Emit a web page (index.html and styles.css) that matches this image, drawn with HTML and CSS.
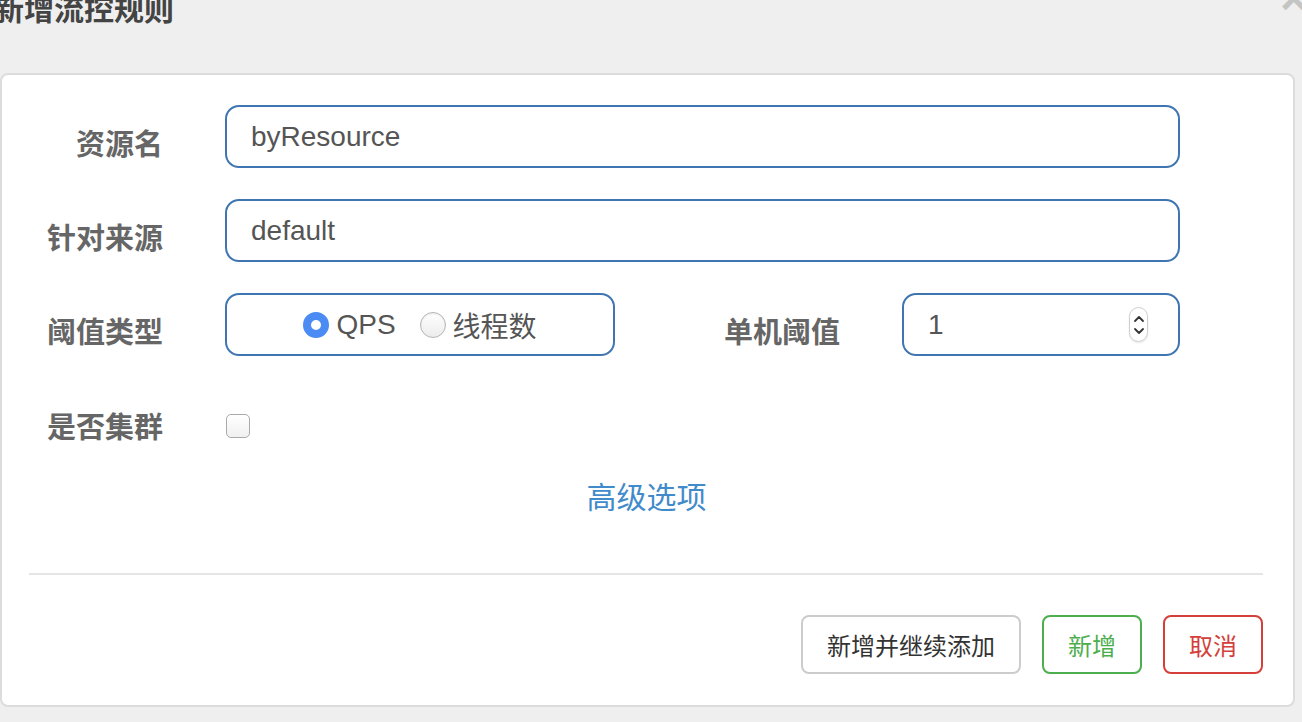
FILE: index.html
```html
<!DOCTYPE html>
<html lang="zh-CN">

<head>
    <meta charset="UTF-8">
    <meta name="viewport" content="width=device-width, initial-scale=1.0">
    <title>新增流控规则</title>
    <link rel="stylesheet" href="styles.css">
</head>

<body>
    <!-- 标题栏 -->
    <div class="modal-header">
        <h4 class="modal-title">新增流控规则</h4>
        <span class="close">&times;</span>
    </div>

    <div class="modal-content">
        <div class="modal-body">
            <form class="rule-form">
                <div class="form-row">
                    <label class="control-label">资源名</label>
                    <input type="text" class="form-control wide" value="byResource">
                </div>

                <div class="form-row">
                    <label class="control-label">针对来源</label>
                    <input type="text" class="form-control wide" value="default">
                </div>

                <div class="form-row">
                    <label class="control-label">阈值类型</label>
                    <div class="form-control radio-group">
                        <label class="radio-item"><input type="radio" name="grade" checked>QPS</label>
                        <label class="radio-item"><input type="radio" name="grade">线程数</label>
                    </div>
                    <label class="control-label long">单机阈值</label>
                    <div class="form-control number-box">
                        <input type="text" class="number-input" value="1">
                        <span class="spinner">
                            <svg width="12" height="28" viewBox="0 0 12 28">
                                <path d="M2 10 L6 6 L10 10" fill="none" stroke="#333" stroke-width="1.8"
                                    stroke-linecap="round" stroke-linejoin="round" />
                                <path d="M2 18 L6 22 L10 18" fill="none" stroke="#333" stroke-width="1.8"
                                    stroke-linecap="round" stroke-linejoin="round" />
                            </svg>
                        </span>
                    </div>
                </div>

                <div class="form-row check-row">
                    <label class="control-label">是否集群</label>
                    <input type="checkbox" class="checkbox">
                </div>
            </form>

            <div class="advanced">
                <a href="#" class="advanced-link">高级选项</a>
            </div>
        </div>

        <!-- 底部按钮 -->
        <div class="modal-footer">
            <button class="btn btn-default">新增并继续添加</button>
            <button class="btn btn-success">新增</button>
            <button class="btn btn-danger">取消</button>
        </div>
    </div>
</body>

</html>
```

FILE: styles.css
```css
body {
    margin: 0;
    background-color: #efefef;
    font-family: "Liberation Sans", "Noto Sans CJK SC", sans-serif;
    color: #555;
    overflow: hidden;
}

.modal-header {
    display: flex;
    justify-content: space-between;
    align-items: flex-start;
    height: 73px;
}

.modal-title {
    margin: -5px 0 0 -6px;
    font-size: 30px;
    line-height: 30px;
    font-weight: bold;
    color: #444;
}

.close {
    margin: -25px -5px 0 0;
    font-size: 46px;
    line-height: 46px;
    font-weight: bold;
    color: #c4c4c4;
}

.modal-content {
    width: 1295px;
    box-sizing: border-box;
    background-color: #fff;
    border: 2px solid #dcdcdc;
    border-radius: 8px;
}

.modal-body {
    padding: 30px 29px 0 27px;
}

.form-row {
    display: flex;
    align-items: center;
    height: 63px;
    margin-bottom: 31px;
}

.control-label {
    width: 134px;
    margin-right: 62px;
    padding-top: 10px;
    text-align: right;
    font-size: 29px;
    font-weight: bold;
    color: #666;
    flex-shrink: 0;
}

.control-label.long {
    width: 225px;
}

.form-control {
    box-sizing: border-box;
    height: 63px;
    border: 2px solid #3f75b1;
    border-radius: 14px;
    background: #fff;
    font-family: inherit;
    font-size: 28px;
    color: #555;
}

input.form-control {
    padding: 0 24px;
    outline: none;
}

.wide {
    width: 955px;
}

/* 阈值类型 */
.radio-group {
    width: 390px;
    display: flex;
    align-items: center;
    justify-content: center;
    gap: 24px;
}

.radio-item {
    display: flex;
    align-items: center;
    gap: 7px;
    font-size: 28px;
    color: #555;
}

.radio-item input {
    appearance: none;
    margin: 0;
    width: 26px;
    height: 26px;
    border-radius: 50%;
    border: 1px solid #b5b5b5;
    background: linear-gradient(#fff, #ececec);
    box-shadow: inset 0 1px 2px rgba(0, 0, 0, 0.08);
}

.radio-item input:checked {
    border: 8px solid #4a8bf4;
    background: #fff;
    box-shadow: none;
}

/* 单机阈值 */
.number-box {
    width: 278px;
    display: flex;
    align-items: center;
    padding: 0 30px 0 24px;
}

.number-input {
    flex: 1;
    width: 0;
    border: none;
    outline: none;
    padding: 0;
    font-family: inherit;
    font-size: 28px;
    color: #555;
}

.spinner {
    display: flex;
    align-items: center;
    justify-content: center;
    width: 19px;
    height: 35px;
    box-sizing: border-box;
    border: 1px solid #cfcfcf;
    border-radius: 10px;
    box-shadow: 0 1px 2px rgba(0, 0, 0, 0.1);
}

/* 是否集群 */
.check-row {
    align-items: flex-start;
}

.check-row .control-label {
    padding-top: 17px;
}

.checkbox {
    appearance: none;
    margin: 27px 0 0 1px;
    width: 24px;
    height: 24px;
    border: 1px solid #aaa;
    border-radius: 5px;
    background: linear-gradient(#fff, #f0f0f0);
}

.advanced {
    text-align: center;
    margin-top: -8px;
    padding-bottom: 56px;
}

.advanced-link {
    font-size: 30px;
    color: #428bca;
    text-decoration: none;
}

.modal-footer {
    display: flex;
    justify-content: flex-end;
    gap: 21px;
    margin: 0 30px 0 27px;
    padding: 40px 0 31px;
    border-top: 2px solid #e5e5e5;
}

.btn {
    height: 59px;
    padding: 0 24px;
    font-family: inherit;
    font-size: 24px;
    background: #fff;
    border: 2px solid #ccc;
    border-radius: 8px;
    cursor: pointer;
}

.btn-default {
    color: #333;
}

.btn-success {
    color: #4cae4c;
    border-color: #4cae4c;
}

.btn-danger {
    color: #d43f3a;
    border-color: #d43f3a;
}
```
